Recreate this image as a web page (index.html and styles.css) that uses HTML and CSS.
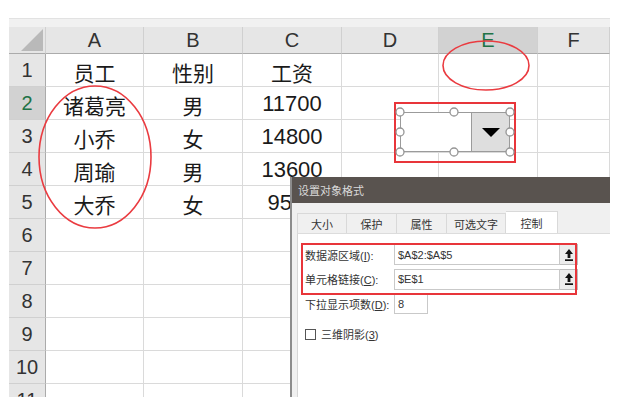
FILE: index.html
```html
<!DOCTYPE html>
<html lang="zh-CN">
<head>
    <meta charset="UTF-8">
    <meta name="viewport" content="width=device-width, initial-scale=1.0">
    <title>设置对象格式 - 下拉框</title>
    <link rel="stylesheet" href="styles.css">
</head>
<body>
    <div class="page">
        <div class="sheet">
            <div class="sheet-top"></div>
            <div class="grid">
                <div class="hd corner">
                    <svg width="24" height="23" viewBox="0 0 24 23"><polygon points="23,0 23,22 1,22" fill="#b9b9b9"/></svg>
                </div>
                <div class="hd">A</div>
                <div class="hd">B</div>
                <div class="hd">C</div>
                <div class="hd">D</div>
                <div class="hd sel">E</div>
                <div class="hd">F</div>

                <div class="rh">1</div>
                <div class="c">员工</div><div class="c">性别</div><div class="c">工资</div><div class="c"></div><div class="c"></div><div class="c"></div>

                <div class="rh sel">2</div>
                <div class="c">诸葛亮</div><div class="c">男</div><div class="c num">11700</div><div class="c"></div><div class="c"></div><div class="c"></div>

                <div class="rh">3</div>
                <div class="c">小乔</div><div class="c">女</div><div class="c num">14800</div><div class="c"></div><div class="c"></div><div class="c"></div>

                <div class="rh">4</div>
                <div class="c">周瑜</div><div class="c">男</div><div class="c num">13600</div><div class="c"></div><div class="c"></div><div class="c"></div>

                <div class="rh">5</div>
                <div class="c">大乔</div><div class="c">女</div><div class="c num">9500</div><div class="c"></div><div class="c"></div><div class="c"></div>

                <div class="rh">6</div>
                <div class="c"></div><div class="c"></div><div class="c"></div><div class="c"></div><div class="c"></div><div class="c"></div>

                <div class="rh">7</div>
                <div class="c"></div><div class="c"></div><div class="c"></div><div class="c"></div><div class="c"></div><div class="c"></div>

                <div class="rh">8</div>
                <div class="c"></div><div class="c"></div><div class="c"></div><div class="c"></div><div class="c"></div><div class="c"></div>

                <div class="rh">9</div>
                <div class="c"></div><div class="c"></div><div class="c"></div><div class="c"></div><div class="c"></div><div class="c"></div>

                <div class="rh">10</div>
                <div class="c"></div><div class="c"></div><div class="c"></div><div class="c"></div><div class="c"></div><div class="c"></div>

                <div class="rh">11</div>
                <div class="c"></div><div class="c"></div><div class="c"></div><div class="c"></div><div class="c"></div><div class="c"></div>
            </div>
        </div>

        <!-- form control dropped on the sheet -->
        <div class="shape">
            <div class="combo">
                <div class="combo-field"></div>
                <div class="combo-btn"><span class="caret"></span></div>
                <svg class="handles" width="110" height="40">
                    <circle cx="0" cy="0" r="4"/>
                    <circle cx="54" cy="0" r="4"/>
                    <circle cx="110" cy="0" r="4"/>
                    <circle cx="0" cy="20" r="4"/>
                    <circle cx="110" cy="20" r="4"/>
                    <circle cx="0" cy="40" r="4"/>
                    <circle cx="54" cy="40" r="4"/>
                    <circle cx="110" cy="40" r="4"/>
                </svg>
            </div>
        </div>

        <svg class="marks" width="620" height="406">
            <ellipse cx="486" cy="65.5" rx="43" ry="24.5"/>
            <ellipse cx="95" cy="157" rx="56" ry="71"/>
        </svg>

        <div class="dialog">
            <div class="dialog-title">设置对象格式</div>
            <div class="dialog-body">
                <div class="tabs">
                    <div class="tab" style="width: 50px">大小</div>
                    <div class="tab" style="width: 50px">保护</div>
                    <div class="tab" style="width: 50px">属性</div>
                    <div class="tab" style="width: 59px">可选文字</div>
                    <div class="tab active" style="width: 52px">控制</div>
                </div>
                <div class="panel">
                    <div class="field">
                        <label class="field-label">数据源区域(<u>I</u>):</label>
                        <div class="input wide">$A$2:$A$5</div>
                        <button class="pick-btn">
                            <svg width="8" height="12" viewBox="0 0 8 12"><polygon points="4,0 8,5 5.4,5 5.4,9 2.6,9 2.6,5 0,5" fill="#111"/><rect x="0" y="10.3" width="8" height="1.7" fill="#111"/></svg>
                        </button>
                    </div>
                    <div class="field">
                        <label class="field-label">单元格链接(<u>C</u>):</label>
                        <div class="input wide">$E$1</div>
                        <button class="pick-btn">
                            <svg width="8" height="12" viewBox="0 0 8 12"><polygon points="4,0 8,5 5.4,5 5.4,9 2.6,9 2.6,5 0,5" fill="#111"/><rect x="0" y="10.3" width="8" height="1.7" fill="#111"/></svg>
                        </button>
                    </div>
                    <div class="field">
                        <label class="field-label">下拉显示项数(<u>D</u>):</label>
                        <div class="input short">8</div>
                    </div>
                    <div class="check-row">
                        <span class="checkbox"></span>
                        <span>三维阴影(<u>3</u>)</span>
                    </div>
                    <div class="highlight"></div>
                </div>
            </div>
        </div>
    </div>
</body>
</html>
```

FILE: styles.css
```css
* {
    box-sizing: border-box;
    margin: 0;
    padding: 0;
}

body {
    font-family: "Liberation Sans", "Noto Sans CJK SC", sans-serif;
    background-color: #fff;
}

.page {
    position: relative;
    width: 620px;
    height: 406px;
    overflow: hidden;
    padding: 18px 0 0 9px;
}

.sheet {
    width: 601px;
    height: 379px;
    overflow: hidden;
}

.sheet-top {
    height: 9px;
    background-color: #f1f1f1;
    border-top: 1px solid #e2e2e2;
}

.grid {
    display: grid;
    grid-template-columns: 37px 98px 99px 99px 97px 99px 72px;
    grid-template-rows: 27px;
    grid-auto-rows: 33px;
}

.hd,
.rh {
    background-color: #e6e6e6;
    color: #333;
    font-size: 20px;
    display: flex;
    align-items: center;
    justify-content: center;
}

.hd {
    border-right: 1px solid #d0d0d0;
    border-bottom: 1px solid #ababab;
}

.rh {
    border-right: 1px solid #ababab;
    border-bottom: 1px solid #d0d0d0;
}

.hd.sel,
.rh.sel {
    background-color: #d2d2d2;
    color: #217346;
}

.corner {
    align-items: flex-end;
    justify-content: flex-end;
    padding: 0 1px 1px 0;
}

.c {
    border-right: 1px solid #dadada;
    border-bottom: 1px solid #dadada;
    color: #1a1a1a;
    font-size: 21px;
    display: flex;
    align-items: center;
    justify-content: center;
    padding-top: 3px;
}

.c.num {
    font-size: 22px;
    padding-top: 1px;
}

/* dropped combo box shape */
.shape {
    position: absolute;
    left: 394px;
    top: 102px;
    width: 122px;
    height: 61px;
    border: 2px solid #e8353a;
    padding: 8px 4px 9px;
}

.combo {
    position: relative;
    height: 40px;
    display: flex;
    border: 1px solid #9b9b9b;
    background-color: #fff;
}

.combo-field {
    flex: 1;
}

.combo-btn {
    width: 38px;
    background-color: #dedede;
    border-left: 1px solid #9b9b9b;
    display: flex;
    align-items: center;
    justify-content: center;
}

.caret {
    width: 0;
    height: 0;
    border-left: 9.5px solid transparent;
    border-right: 9.5px solid transparent;
    border-top: 9px solid #000;
    margin-top: 1px;
}

.handles {
    position: absolute;
    left: -1px;
    top: -1px;
    overflow: visible;
}

.handles circle {
    fill: #fff;
    stroke: #959595;
    stroke-width: 1.3;
}

.marks {
    position: absolute;
    left: 0;
    top: 0;
    pointer-events: none;
}

.marks ellipse {
    fill: none;
    stroke: #ea3b40;
    stroke-width: 1.6;
}

/* format object dialog */
.dialog {
    position: absolute;
    left: 290px;
    top: 177px;
    width: 320px;
    height: 220px;
    border-left: 2px solid #8c8c8c;
    background-color: #f0f0f0;
    display: flex;
    flex-direction: column;
    font-size: 11px;
    color: #333;
}

.dialog-title {
    height: 26px;
    background-color: #59534f;
    color: #dadada;
    padding-left: 6px;
    display: flex;
    align-items: center;
}

.dialog-body {
    flex: 1;
    display: flex;
    flex-direction: column;
    padding: 8px 0 0 5px;
}

.tabs {
    display: flex;
    align-items: flex-end;
    height: 22px;
}

.tab {
    height: 20px;
    border: 1px solid #d9d9d9;
    border-bottom: none;
    border-left: none;
    display: flex;
    align-items: center;
    justify-content: center;
}

.tab:first-child {
    border-left: 1px solid #d9d9d9;
}

.tab.active {
    height: 22px;
    background-color: #fff;
}

.panel {
    position: relative;
    flex: 1;
    background-color: #fff;
    border-left: 1px solid #d6d6d6;
    border-top: 1px solid #dcdcdc;
    padding: 10px 0 0 7px;
}

.field {
    display: flex;
    align-items: center;
    height: 21px;
    margin-bottom: 3.5px;
}

.field-label {
    width: 89px;
}

.input {
    height: 21px;
    border: 1px solid #c9c9c9;
    padding-left: 3px;
    display: flex;
    align-items: center;
    background-color: #fff;
}

.input.wide {
    width: 166px;
}

.input.short {
    width: 34px;
}

.pick-btn {
    width: 18px;
    height: 21px;
    border: 1px solid #bdbdbd;
    border-left: none;
    background-color: #ececec;
    display: flex;
    align-items: center;
    justify-content: center;
}

.check-row {
    display: flex;
    align-items: center;
    gap: 5px;
    margin-top: 12px;
}

.checkbox {
    width: 11px;
    height: 11px;
    border: 1px solid #555;
    background-color: #fff;
}

.highlight {
    position: absolute;
    left: 3px;
    top: 9px;
    width: 276px;
    height: 52px;
    border: 2px solid #e8353a;
    pointer-events: none;
}
```
